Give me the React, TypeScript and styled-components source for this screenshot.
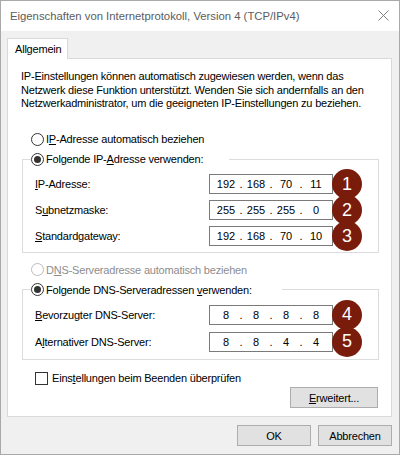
import React from "react";
import styled, { createGlobalStyle } from "styled-components";

const Global = createGlobalStyle`
  html, body { margin: 0; padding: 0; background: #fff; }
  body { width: 400px; height: 455px; overflow: hidden; }
  * { box-sizing: border-box; }
`;

const FONT = `"Liberation Sans", Arial, sans-serif`;

const Window = styled.div`
  width: 400px;
  height: 455px;
  border: 1px solid #a9a9a9;
  display: flex;
  flex-direction: column;
  font-family: ${FONT};
  font-size: 11px;
  letter-spacing: -0.2px;
  color: #000;
  background: #f0f0f0;
`;

const TitleBar = styled.div`
  height: 30px;
  flex: none;
  background: #fff;
  display: flex;
  align-items: center;
  justify-content: space-between;
  padding: 0 10px 0 9px;
`;

const TitleText = styled.span`
  font-size: 11.3px;
  letter-spacing: 0;
  color: #5c5c5c;
  margin-top: -1px;
`;

const CloseButton = styled.span`
  display: flex;
  width: 11px;
  height: 11px;
  margin-top: -1px;
`;

const Body = styled.div`
  flex: 1;
  display: flex;
  flex-direction: column;
  padding: 7px 7px 8px 6px;
`;

const TabStrip = styled.div`
  display: flex;
  height: 20px;
`;

const Tab = styled.div`
  position: relative;
  z-index: 1;
  height: 21px;
  padding: 4px 7px 0 7px;
  background: #fff;
  border: 1px solid #d9d9d9;
  border-bottom: none;
  width: 61px;
`;

const Panel = styled.div`
  flex: none;
  height: 359px;
  background: #fff;
  border: 1px solid #d9d9d9;
  display: flex;
  flex-direction: column;
  padding: 11px 12px 8px 13px;
`;

const Intro = styled.p`
  margin: 0;
  line-height: 13.5px;
  white-space: nowrap;
`;

const Key = styled.span`
  text-decoration: underline;
  text-underline-offset: 1px;
`;

const OptionRow = styled.label<{ $indent?: number; $top?: number }>`
  display: flex;
  align-items: center;
  height: 16px;
  margin-top: ${(p) => p.$top ?? 0}px;
  padding-left: ${(p) => p.$indent ?? 0}px;
  gap: 2px;
`;

const RadioCircle = styled.span<{ $checked?: boolean; $disabled?: boolean }>`
  width: 13px;
  height: 13px;
  border-radius: 50%;
  border: 1px solid ${(p) => (p.$disabled ? "#bcbcbc" : "#333")};
  background: #fff;
  display: flex;
  align-items: center;
  justify-content: center;
  flex: none;
  &::after {
    content: "";
    display: ${(p) => (p.$checked ? "block" : "none")};
    width: 7px;
    height: 7px;
    border-radius: 50%;
    background: #333;
  }
`;

const OptionText = styled.span<{ $disabled?: boolean }>`
  color: ${(p) => (p.$disabled ? "#8d8d8d" : "#000")};
  white-space: nowrap;
`;

const CheckBox = styled.span`
  width: 13px;
  height: 13px;
  border: 1px solid #333;
  background: #fff;
  flex: none;
  margin-right: 2px;
`;

const Group = styled.fieldset<{ $gap: number }>`
  margin: 4px 0 0 1px;
  padding: 7px 0 ${(p) => p.$gap}px 12px;
  border: 1px solid #dcdcdc;
  display: flex;
  flex-direction: column;
  gap: ${(p) => p.$gap}px;
  min-width: 0;
`;

const Legend = styled.legend<{ $pad: number }>`
  margin-left: -4px;
  padding: 0 ${(p) => p.$pad}px 0 0;
`;

const FieldRow = styled.div`
  display: grid;
  grid-template-columns: 174px 124px 30px;
  align-items: center;
  height: 20px;
`;

const IpBox = styled.div`
  width: 124px;
  height: 20px;
  border: 1px solid #7a7a7a;
  background: #fff;
  padding: 0 4px;
  display: grid;
  grid-template-columns: 24px 6px 24px 6px 24px 6px 24px;
  align-items: center;
  text-align: center;
  letter-spacing: 0;
`;

const Octet = styled.span``;

const Dot = styled.span``;

const Badge = styled.span`
  width: 30px;
  height: 30px;
  margin: -5px 0 -5px -1px;
  border-radius: 50%;
  background: #7a1c0b;
  color: #fff;
  font-family: ${FONT};
  font-size: 18px;
  letter-spacing: 0;
  display: flex;
  align-items: center;
  justify-content: center;
  position: relative;
`;

const BottomBar = styled.div<{ $top: number }>`
  display: flex;
  justify-content: flex-end;
  gap: 7px;
  margin-top: ${(p) => p.$top}px;
`;

const Button = styled.button<{ $w: number }>`
  width: ${(p) => p.$w}px;
  height: 21px;
  border: 1px solid #adadad;
  background: #e1e1e1;
  font-family: ${FONT};
  font-size: 11px;
  letter-spacing: -0.2px;
  color: #000;
  padding: 0;
  margin: 0;
  display: flex;
  align-items: center;
  justify-content: center;
`;

const PanelButtons = styled(BottomBar)`
  padding-right: 1px;
`;

function IpField({ value }: { value: string[] }) {
  return (
    <IpBox>
      {value.map((v, i) => (
        <React.Fragment key={i}>
          {i > 0 && <Dot>.</Dot>}
          <Octet>{v}</Octet>
        </React.Fragment>
      ))}
    </IpBox>
  );
}

function Field({ label, value, n }: { label: React.ReactNode; value: string[]; n: number }) {
  return (
    <FieldRow>
      <span>{label}</span>
      <IpField value={value} />
      <Badge>{n}</Badge>
    </FieldRow>
  );
}

export default function App() {
  return (
    <>
      <Global />
      <Window>
        <TitleBar>
          <TitleText>Eigenschaften von Internetprotokoll, Version 4 (TCP/IPv4)</TitleText>
          <CloseButton>
            <svg width="11" height="11" viewBox="0 0 11 11">
              <path d="M0.5 0.5L10.5 10.5M10.5 0.5L0.5 10.5" stroke="#808080" strokeWidth="1" fill="none" />
            </svg>
          </CloseButton>
        </TitleBar>
        <Body>
          <TabStrip>
            <Tab>Allgemein</Tab>
          </TabStrip>
          <Panel>
            <Intro>
              IP-Einstellungen können automatisch zugewiesen werden, wenn das
              <br />
              Netzwerk diese Funktion unterstützt. Wenden Sie sich andernfalls an den
              <br />
              Netzwerkadministrator, um die geeigneten IP-Einstellungen zu beziehen.
            </Intro>
            <OptionRow $indent={10} $top={21}>
              <RadioCircle />
              <OptionText>
                I<Key>P</Key>-Adresse automatisch beziehen
              </OptionText>
            </OptionRow>
            <Group $gap={6}>
              <Legend $pad={26}>
                <OptionRow>
                  <RadioCircle $checked />
                  <OptionText>
                    Folgende IP-<Key>A</Key>dresse verwenden:
                  </OptionText>
                </OptionRow>
              </Legend>
              <Field label={<><Key>I</Key>P-Adresse:</>} value={["192", "168", "70", "11"]} n={1} />
              <Field label={<>S<Key>u</Key>bnetzmaske:</>} value={["255", "255", "255", "0"]} n={2} />
              <Field label={<><Key>S</Key>tandardgateway:</>} value={["192", "168", "70", "10"]} n={3} />
            </Group>
            <OptionRow $indent={10} $top={9}>
              <RadioCircle $disabled />
              <OptionText $disabled>
                D<Key>N</Key>S-Serveradresse automatisch beziehen
              </OptionText>
            </OptionRow>
            <Group $gap={7}>
              <Legend $pad={30}>
                <OptionRow>
                  <RadioCircle $checked />
                  <OptionText>
                    Folgende DNS-Serveradressen <Key>v</Key>erwenden:
                  </OptionText>
                </OptionRow>
              </Legend>
              <Field label={<><Key>B</Key>evorzugter DNS-Server:</>} value={["8", "8", "8", "8"]} n={4} />
              <Field label={<>A<Key>l</Key>ternativer DNS-Server:</>} value={["8", "8", "4", "4"]} n={5} />
            </Group>
            <OptionRow $indent={14} $top={11}>
              <CheckBox />
              <OptionText>
                Eins<Key>t</Key>ellungen beim Beenden überprüfen
              </OptionText>
            </OptionRow>
            <PanelButtons $top={1}>
              <Button $w={88}>
                <Key>E</Key>rweitert...
              </Button>
            </PanelButtons>
          </Panel>
          <BottomBar $top={8}>
            <Button $w={74}>OK</Button>
            <Button $w={74}>Abbrechen</Button>
          </BottomBar>
        </Body>
      </Window>
    </>
  );
}
